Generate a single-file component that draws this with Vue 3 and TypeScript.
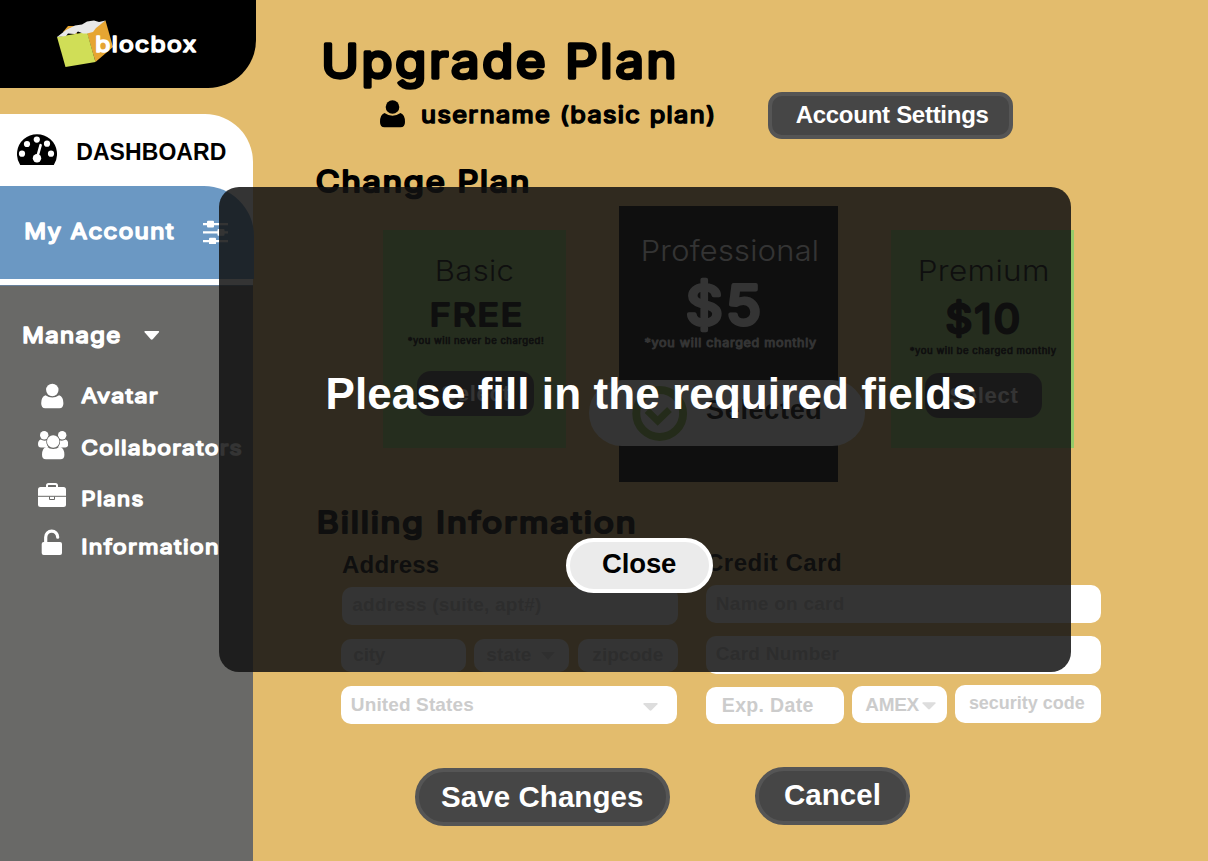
<script setup lang="ts">
import { h, type Directive } from 'vue'

interface RoundProps {
  text: string
  w: number
  cap: number
  look?: 'bold' | 'light'
}

// Rounded display lettering; its box runs from cap height to baseline.
const RoundText = (p: RoundProps) => {
  const light = p.look === 'light'
  const size = light ? p.cap / 0.727 : p.cap / 0.8
  const stroke = light ? 0 : size * 0.073
  const lead = light ? size * 0.08 : size * 0.04
  return h(
    'svg',
    { width: p.w, height: p.cap, overflow: 'visible', style: { display: 'block', flex: 'none' } },
    [
      h(
        'text',
        {
          x: -lead,
          y: p.cap - stroke / 2,
          textLength: p.w + lead * 2 + (light ? 0 : size * 0.03),
          lengthAdjust: 'spacingAndGlyphs',
          'letter-spacing': light ? size * 0.01 : size * 0.055,
          'font-family': 'Inter, "Open Sans", sans-serif',
          'font-size': size,
          'font-weight': light ? 300 : 400,
          fill: 'currentColor',
          stroke: light ? 'none' : 'currentColor',
          'stroke-width': stroke,
          'stroke-linejoin': 'round',
        },
        p.text,
      ),
    ],
  )
}
RoundText.props = ['text', 'w', 'cap', 'look']

// Tracks a line of text out to the given width in pixels.
const vFit: Directive<HTMLElement, number> = {
  mounted(el, { value }) {
    const size = parseFloat(getComputedStyle(el).fontSize)
    const range = document.createRange()
    range.selectNodeContents(el)
    const natural = range.getBoundingClientRect().width
    const count = (el.textContent ?? '').length
    el.style.letterSpacing = `${(value + size * 0.05 - natural) / (count - 1)}px`
    el.style.width = `${value}px`
  },
}
</script>

<template>
  <div class="page">
    <aside class="sidebar">
      <header class="brand">
        <svg class="cube" width="57" height="48" viewBox="0 0 57 48">
          <path d="M6 12 L11 6 L18 6 L20 14 Z" fill="#e6a532" />
          <path d="M30 13 L48.5 0.5 L56 27 L38.5 42 Z" fill="#e6a532" />
          <path d="M0 17 L30 12 L38.5 42 L8.5 47 Z" fill="#d0de57" />
          <path d="M0 17 L9 10 L18 5.5 L25 4.5 L30 1.5 L37 0.5 L42 2 L48.5 0.5 L39 8 L36 12 L30 13.5 L26 13.5 L21 11.5 L18 14 L11 13.5 L9 16 Z" fill="#e8e8e8" />
        </svg>
        <RoundText class="brand-name" text="blocbox" :w="100" :cap="17" />
      </header>
      <nav class="tabs">
        <a class="dashboard">
          <svg width="40" height="31" viewBox="0 0 40 31">
            <path d="M3.2 31 A20 20 0 1 1 36.8 31 Z" fill="#000" />
            <g fill="#fff">
              <circle cx="5" cy="19.7" r="3.1" /><circle cx="10" cy="10" r="3.1" />
              <circle cx="19.8" cy="5.6" r="3.1" /><circle cx="30" cy="9.7" r="3.1" />
              <circle cx="34" cy="19.7" r="3.1" /><circle cx="20" cy="24.3" r="4.2" />
            </g>
            <path d="M20 24 L23.6 11.2" stroke="#fff" stroke-width="2.6" stroke-linecap="round" />
          </svg>
          <span class="sans s23" v-fit="149">DASHBOARD</span>
        </a>
        <a class="account">
          <RoundText text="My Account" :w="148.500" :cap="17" />
          <svg width="26" height="24" viewBox="0 0 26 24" fill="#fff">
            <path d="M0 3h25v2.2H0zM0 11.3h25v2.2H0zM0 20h25v2.2H0z" />
            <rect x="4" y="0.7" width="7" height="6.8" rx="1" />
            <rect x="14.5" y="9" width="7" height="6.8" rx="1" />
            <rect x="6" y="17.7" width="7" height="6.8" rx="1" />
          </svg>
        </a>
      </nav>
      <section class="manage">
        <div class="manage-head">
          <RoundText text="Manage" :w="97" :cap="17" />
          <svg width="16" height="9" viewBox="0 0 16 9"><path d="M1 0h13.5q1 .5 .4 1.3L8.7 8.2q-1 .9-2 0L.6 1.3Q0 .5 1 0z" fill="#fff" /></svg>
        </div>
        <ul>
          <li>
            <svg class="ic" width="30" height="28" viewBox="0 0 30 28" fill="#fff">
              <circle cx="14.3" cy="8" r="6.2" />
              <path d="M7.500 13.300q6.800 4.600 13.600 0q4.300 1.500 4.300 8q0 5-4 5H7.200q-4 0-4-5q0-6.500 4.300-8z" />
            </svg>
            <RoundText text="Avatar" :w="75.500" :cap="16" />
          </li>
          <li>
            <svg class="ic" width="30" height="29" viewBox="0 0 30 29" fill="#fff">
              <circle cx="6.200" cy="4.200" r="4.200" /><circle cx="24.200" cy="4.200" r="4.200" />
              <path d="M2.500 8.500q3.500 2 7 .5q-2 4 1 7.500H3q-3 0-3-3.500q0-3.500 2.500-4.500zM27.800 8.500q-3.500 2-7 .5q2 4-1 7.500h7.500q3 0 3-3.500q0-3.500-2.500-4.500z" />
              <circle cx="15.200" cy="10.500" r="6.900" fill="#696967" /><circle cx="15.200" cy="10.500" r="6.200" />
              <path d="M8.500 15.800q6.700 4.500 13.400 0q4.500 1.500 4.500 8q0 4.500-4 4.500H8q-4 0-4-4.500q0-6.500 4.500-8z" />
            </svg>
            <RoundText text="Collaborators" :w="159.500" :cap="16" />
          </li>
          <li>
            <svg class="ic" width="30" height="25" viewBox="0 0 30 25">
              <path d="M9 5V2.500Q9 1 10.500 1h7Q19 1 19 2.500V5" fill="none" stroke="#fff" stroke-width="2" />
              <rect y="4" width="28" height="20" rx="2.500" fill="#fff" />
              <path d="M0 13.300h28" stroke="#696967" stroke-width="1" />
              <path d="M11.500 13.500v3h5v-3" fill="none" stroke="#696967" stroke-width="1" />
            </svg>
            <RoundText text="Plans" :w="61" :cap="16" />
          </li>
          <li>
            <svg class="ic" width="30" height="27" viewBox="0 0 30 27">
              <path d="M7.700 14V8.200a6 6 0 0 1 12 0" fill="none" stroke="#fff" stroke-width="3.200" stroke-linecap="round" />
              <rect x="3.700" y="13" width="20.300" height="13" rx="2" fill="#fff" />
            </svg>
            <RoundText text="Information" :w="136.500" :cap="16" />
          </li>
        </ul>
      </section>
    </aside>

    <main class="content">
      <RoundText class="title" text="Upgrade Plan" :w="353" :cap="37.5" />
      <div class="user">
        <svg width="25" height="28" viewBox="0 0 25 28">
          <circle cx="12.500" cy="7" r="6.800" />
          <path d="M4.500 13q8 5.500 16 0q4.500 1.500 4.500 9q0 5.300-4.500 5.300h-16Q0 27.300 0 22q0-7.500 4.500-9z" />
        </svg>
        <RoundText text="username (basic plan)" :w="293" :cap="18" />
        <button class="dark settings"><span class="sans s24" v-fit="192">Account Settings</span></button>
      </div>
      <RoundText class="h2" text="Change Plan" :w="212" :cap="23.5" />

      <div class="plans">
        <article class="plan basic">
          <RoundText text="Basic" :w="75" :cap="20.5" look="light" />
          <RoundText class="price" text="FREE" :w="91" :cap="24.5" />
          <RoundText class="note" text="*you will never be charged!" :w="135.5" :cap="7.5" />
          <button class="dark select"><span class="sans s22" v-fit="67.5">Select</span></button>
        </article>
        <article class="plan pro">
          <RoundText text="Professional" :w="174" :cap="21" look="light" />
          <RoundText class="price" text="$5" :w="72.500" :cap="43.500" />
          <RoundText class="note" text="*you will charged monthly" :w="171" :cap="9" />
          <div class="selected">
            <svg width="56" height="56" viewBox="0 0 56 56" fill="none" stroke="#92c04f">
              <circle cx="27.700" cy="27.500" r="23.400" stroke-width="8" />
              <path d="M15 24.500L25.700 35L37.500 23.500" stroke-width="6.800" />
            </svg>
            <span class="sans s27" v-fit="114.500">Selected</span>
          </div>
        </article>
        <article class="plan premium">
          <RoundText text="Premium" :w="127.500" :cap="20.500" look="light" />
          <RoundText class="price" text="$10" :w="72.500" :cap="31.500" />
          <RoundText class="note" text="*you will be charged monthly" :w="146" :cap="7.500" />
          <button class="dark select"><span class="sans s22" v-fit="67.5">Select</span></button>
        </article>
      </div>

      <RoundText class="h2 billing" text="Billing Information" :w="317.500" :cap="23.500" />

      <form class="forms" @submit.prevent>
        <div class="address">
          <label class="sans s24" v-fit="96">Address</label>
          <div class="field line"><span class="sans s19" v-fit="188">address (suite, apt#)</span></div>
          <div class="trio">
            <div class="field city"><span class="sans s19" v-fit="31">city</span></div>
            <div class="field state">
              <span class="sans s19" v-fit="44">state</span>
              <svg width="14" height="8" viewBox="0 0 14 8"><path d="M0 0h14L7 8z" fill="#ddd" /></svg>
            </div>
            <div class="field zip"><span class="sans s19" v-fit="70">zipcode</span></div>
          </div>
          <div class="field country">
            <span class="sans s19" v-fit="122">United States</span>
            <svg width="15" height="8" viewBox="0 0 15 8"><path d="M1 0h13q1 .3.400 1.200L8.500 7.300q-1 .9-2 0L.6 1.200Q0 .3 1 0z" fill="#ddd" /></svg>
          </div>
        </div>
        <div class="card">
          <label class="sans s24" v-fit="134.500">Credit Card</label>
          <div class="field name"><span class="sans s19" v-fit="127.500">Name on card</span></div>
          <div class="field number"><span class="sans s19" v-fit="122">Card Number</span></div>
          <div class="trio">
            <div class="field exp"><span class="sans s195" v-fit="90.500">Exp. Date</span></div>
            <div class="field amex">
              <span class="sans s19" v-fit="53">AMEX</span>
              <svg width="14" height="8" viewBox="0 0 15 8"><path d="M1 0h13q1 .3.400 1.200L8.500 7.300q-1 .9-2 0L.6 1.200Q0 .3 1 0z" fill="#ddd" /></svg>
            </div>
            <div class="field code"><span class="sans s18" v-fit="115">security code</span></div>
          </div>
        </div>
      </form>

      <div class="actions">
        <button class="dark save"><span class="sans s295" v-fit="201">Save Changes</span></button>
        <button class="dark cancel"><span class="sans s295" v-fit="95.500">Cancel</span></button>
      </div>
    </main>

    <div class="modal" role="alertdialog">
      <p class="sans s44" v-fit="649">Please fill in the required fields</p>
      <button class="close"><span class="sans s275" v-fit="73">Close</span></button>
    </div>
  </div>
</template>

<style>
html,
body {
  background: #e3bc6d;
  overflow: hidden;
}
</style>

<style scoped>
.page {
  position: relative;
  display: flex;
  width: 1208px;
  height: 861px;
  overflow: hidden;
  background: #e3bc6d;
  color: #000;
}
.page * { box-sizing: border-box; }
.page svg { flex: none; display: block; }
.sans {
  display: block;
  flex: none;
  margin: 0 0 0 -0.035em;
  font-family: "Liberation Sans", Arial, sans-serif;
  font-weight: 700;
  line-height: 0.72;
  white-space: nowrap;
}
.s18 { font-size: 18px; }
.s19 { font-size: 19px; }
.s195 { font-size: 19.5px; }
.s22 { font-size: 22px; }
.s23 { font-size: 23px; }
.s24 { font-size: 24px; }
.s27 { font-size: 27px; }
.s275 { font-size: 27.5px; }
.s295 { font-size: 29.5px; }
.s44 { font-size: 44px; }

/* Sidebar */
.sidebar {
  display: flex;
  flex-direction: column;
  flex: none;
  width: 253px;
}
.brand {
  display: flex;
  width: 256px;
  height: 88px;
  padding: 20px 0 0 57px;
  border-radius: 0 0 48px 0;
  background: #000;
  color: #fff;
}
.brand-name { margin: 15.500px 0 0 -18px; }
.tabs {
  height: 171px;
  margin-top: 26px;
  border-radius: 0 48px 0 0;
  background: #fff;
}
.dashboard {
  display: flex;
  gap: 20px;
  height: 72px;
  padding: 20px 0 0 17px;
}
.dashboard .sans { margin-top: 9.500px; }
.account {
  display: flex;
  gap: 29.500px;
  width: 254px;
  height: 93px;
  padding: 37px 0 0 25px;
  border-radius: 0 50px 0 0;
  background: #6b98c3;
  color: #fff;
}
.account svg:last-child { margin-top: -3px; }
.manage {
  flex: 1;
  padding: 42px 0 0 23px;
  border-top: 1px solid #68809a;
  background: #696967;
  color: #fff;
}
.manage-head { display: flex; gap: 23.500px; align-items: center; height: 17px; margin-top: -1px; }
.manage-head svg:last-child { margin-top: -1px; }
.manage ul {
  display: grid;
  grid-template-rows: 50px 53px 49px 50px;
  margin: 27px 0 0 15px;
  padding: 0;
  list-style: none;
}
.manage li { display: flex; gap: 13.500px; align-items: center; }
.manage li:nth-child(4) { padding-bottom: 2px; }
.manage li:nth-child(4) .ic { margin-top: -9px; }
.manage li:nth-child(3) .ic { margin-top: -7px; }
.manage li:nth-child(2) .ic { margin-top: -4px; }

/* Content */
.content { flex: none; width: 955px; padding: 42px 0 0 64px; }
.title { margin-left: 6px; }
.user { display: flex; height: 47px; margin: 12.500px 0 0 63px; }
.user > svg:nth-child(1) { margin-top: 8px; }
.user > svg:nth-child(2) { margin: 14px 0 0 16.500px; }
button {
  display: flex;
  flex: none;
  padding: 0;
  cursor: pointer;
}
.dark { border: 4px solid #555; background: #464646; color: #fff; }
.settings { width: 245px; height: 47px; margin-left: 53.500px; padding: 9.500px 0 0 24.500px; border-radius: 14px; }
.h2 { margin-top: 30.500px; }
.plans { display: flex; align-items: flex-start; margin: 13px 0 0 66px; }
.plan { display: flex; flex-direction: column; flex: none; width: 183px; height: 218px; background: #96cb69; }
.basic { margin-top: 24px; padding: 30.300px 0 0 54px; }
.basic .price { margin: 22.500px 0 0 -6px; }
.basic .note { margin: 9px 0 0 -29px; }
.basic .select { margin: 26.500px 0 0 -20px; }
.select { width: 117px; height: 45px; padding: 11px 0 0 21px; border-color: #4a4a4a; border-radius: 14px; }
.pro { width: 219px; height: 276px; margin-left: 53px; padding: 34px 0 0 24px; background: #000; color: #fff; }
.pro .price { margin: 21.500px 0 0 45px; }
.pro .note { margin: 12px 0 0 2px; }
.selected {
  display: flex;
  flex: none;
  width: 276px;
  height: 66px;
  margin: 33px 0 0 -54px;
  padding: 6px 0 0 42.500px;
  border-radius: 33px;
  background: #fff;
  color: #000;
}
.selected .sans { margin: 15px 0 0 18.500px; }
.premium { margin: 24px 0 0 53px; padding: 30.300px 0 0 29px; }
.premium .price { margin: 22.500px 0 0 27px; }
.premium .note { margin: 12px 0 0 -10px; }
.premium .select { margin: 18.500px 0 0 5px; }
.billing { margin: 28.500px 0 0 1px; }

.forms { display: flex; margin: 22px 0 0 24px; }
.address { width: 337px; }
.card { width: 395px; margin-left: 28px; }
label { color: #000; }
.address label { margin-left: 1px; }
.card label { margin: -2px 0 0; }
.field { display: flex; flex: none; border-radius: 10px; background: #fff; color: #ccc; }
.line { width: 336px; height: 38px; margin: 14px 0 0 1px; padding: 11px 0 0 11px; }
.trio { display: flex; }
.address .trio { gap: 8px; margin-top: 14px; }
.city { width: 125px; height: 33px; padding: 9px 0 0 13px; }
.state { width: 95px; height: 33px; padding: 9px 0 0 13px; }
.state svg { margin: 4px 0 0 10.500px; }
.zip { width: 100px; height: 33px; margin-left: 1px; padding: 9px 0 0 15px; }
.country { width: 336px; height: 38px; margin-top: 14px; padding: 11.500px 0 0 10.500px; }
.country svg { margin: 5px 0 0 170.500px; }
.name { height: 38px; margin-top: 14px; padding: 11.500px 0 0 10.500px; }
.number { height: 38px; margin-top: 13px; padding: 11px 0 0 10.500px; }
.card .trio { margin-top: 11px; }
.exp { width: 138px; height: 37px; margin-top: 2px; padding: 11px 0 0 16.500px; }
.amex { width: 95px; height: 37px; margin: 1px 0 0 8px; padding: 11.500px 0 0 14px; }
.amex svg { margin: 4.500px 0 0 3.500px; }
.code { width: 146px; height: 38px; margin-left: 8px; padding: 11.500px 0 0 14.500px; }

.actions { display: flex; margin: 43px 0 0 98px; }
.save { width: 255px; height: 58px; margin-top: 1px; padding: 13.500px 0 0 23px; border-radius: 29px; }
.cancel { width: 155px; height: 58px; margin-left: 85px; padding: 12.500px 0 0 26px; border-radius: 29px; }

/* Dialog */
.modal {
  position: absolute;
  top: 187px;
  left: 219px;
  width: 852px;
  height: 485px;
  padding: 191px 0 0 108px;
  border-radius: 20px;
  background: rgba(18, 18, 18, 0.855);
  color: #fff;
}
.close {
  width: 147px;
  height: 55px;
  margin: 128.300px 0 0 239px;
  padding: 12.500px 0 0 33px;
  border: 4px solid #fff;
  border-radius: 28px;
  background: #ebebeb;
  color: #000;
}
</style>
